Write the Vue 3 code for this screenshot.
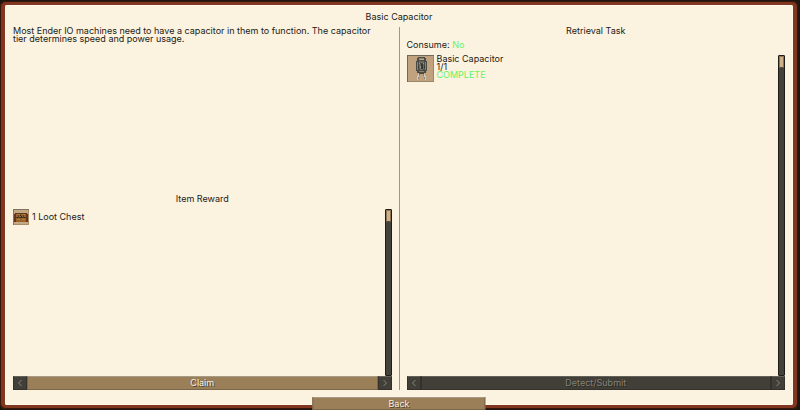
<script setup>
import { ref } from 'vue'

const task = ref({ name: 'Basic Capacitor', have: 1, need: 1, consume: false })
const reward = ref({ count: 1, name: 'Loot Chest' })
</script>

<template>
  <div class="screen">
    <main class="book">
      <h1 class="line title">Basic Capacitor</h1>
      <div class="pages">
        <section class="page">
          <p class="description">Most Ender IO machines need to have a capacitor in them to function. The capacitor tier determines speed and power usage.</p>
          <h2 class="line heading">Item Reward</h2>
          <div class="list">
            <div class="entry small">
              <svg class="slot" width="16" height="16" viewBox="0 0 16 16" shape-rendering="crispEdges" aria-hidden="true">
                <path fill="#c4a783" d="M0 0h16v16H0z" />
                <path fill="#80735f" d="M0 0h16v1H0zM0 1h1v15H0z" />
                <path fill="#a98d69" d="M15 1h1v15H1v-1h14z" />
                <path fill="#5a3a1c" d="M2 4h12v1h1v8H1V5h1z" />
                <path fill="#966329" d="M3 5h10v3H3zM3 9h10v4H3z" />
                <path fill="#b77a35" d="M4 5h2v1H4zM10 5h2v1h-2zM4 10h3v1H4zM9 10h3v1H9z" />
                <path fill="#702f1f" d="M1 5h2v3H1zM13 5h2v3h-2zM1 11h2v2H1zM13 11h2v2h-2zM5 6h1v2H5zM10 6h1v2h-1z" />
                <path fill="#302b22" d="M7 6h2v3H7zM4 8h1v1H4zM11 8h1v1h-1z" />
                <path fill="#668078" d="M7 7h1v1H7z" />
                <path fill="#a33b28" d="M8 6h1v1H8z" />
              </svg>
              <span class="line">{{ reward.count }} {{ reward.name }}</span>
            </div>
            <div class="track"><div class="thumb"></div></div>
          </div>
          <div class="actions">
            <button class="btn off arrow" aria-label="Previous reward">
              <svg width="6" height="8" viewBox="0 0 6 8" aria-hidden="true"><path d="M4.5 1L1.5 4l3 3" /></svg>
            </button>
            <button class="btn wide">Claim</button>
            <button class="btn off arrow" aria-label="Next reward">
              <svg width="6" height="8" viewBox="0 0 6 8" aria-hidden="true"><path d="M1.5 1l3 3-3 3" /></svg>
            </button>
          </div>
        </section>

        <div class="divider"></div>

        <section class="page">
          <h2 class="line heading">Retrieval Task</h2>
          <p class="line consume">Consume: <span class="green">{{ task.consume ? 'Yes' : 'No' }}</span></p>
          <div class="list">
            <div class="entry">
              <svg class="slot" width="27" height="27" viewBox="0 0 27 27" shape-rendering="crispEdges" aria-hidden="true">
                <path fill="#c1a27e" d="M0 0h27v27H0z" />
                <path fill="#71685a" d="M0 0h27v1H0zM0 1h1v26H0z" />
                <path fill="#9c8668" d="M26 1h1v26H1v-1h25z" />
                <path fill="#4b4b45" d="M11 2h7v1h1v3h1v10h-1v2h-2v1h-5v-1h-2v-2H9V6h1V3h1z" />
                <path fill="#85847b" d="M12 3h5v1h-5zM10 7h1v8h-1zM18 7h1v8h-1zM12 16h5v1h-5z" />
                <path fill="#b9a78d" d="M12 4h5v1h-5z" />
                <path fill="#6b6b64" d="M12 6h5v2h-5zM12 9h2v5h-2zM16 9h1v5h-1z" />
                <path fill="#98968c" d="M12 8h1v1h-1zM16 8h1v1h-1zM13 11h1v2h-1z" />
                <path fill="#353733" d="M14 9h2v5h-2zM11 11h1v2h-1zM17 11h1v2h-1z" />
                <path fill="#77766f" d="M13 14h3v1h-3z" />
                <path fill="#d3cdbf" d="M11 19h1v3h-1zM10 21h1v4h-1zM17 19h1v3h-1zM18 21h1v4h-1z" />
                <path fill="#89857a" d="M12 19h1v2h-1zM11 22h1v2h-1zM16 19h1v2h-1zM17 22h1v2h-1z" />
              </svg>
              <div class="details">
                <span class="line">{{ task.name }}</span>
                <span class="line">{{ task.have }}/{{ task.need }}</span>
                <span v-if="task.have >= task.need" class="line green">COMPLETE</span>
              </div>
            </div>
            <div class="track"><div class="thumb"></div></div>
          </div>
          <div class="actions">
            <button class="btn off arrow" aria-label="Previous task">
              <svg width="6" height="8" viewBox="0 0 6 8" aria-hidden="true"><path d="M4.5 1L1.5 4l3 3" /></svg>
            </button>
            <button class="btn off wide" disabled>Detect/Submit</button>
            <button class="btn off arrow" aria-label="Next task">
              <svg width="6" height="8" viewBox="0 0 6 8" aria-hidden="true"><path d="M1.5 1l3 3-3 3" /></svg>
            </button>
          </div>
        </section>
      </div>
      <button class="btn back">Back</button>
    </main>
  </div>
</template>

<style>
body {
  background: #1d1610;
}
</style>

<style scoped>
.screen {
  box-sizing: border-box;
  display: flex;
  min-height: 100vh;
  padding: 1px 2px 1px 0;
  background: #1d1610;
  color: #1c1b17;
  font: 9px/8px Inter, "Liberation Sans", sans-serif;
}
.book {
  position: relative;
  box-sizing: border-box;
  flex: 1;
  display: flex;
  flex-direction: column;
  gap: 6px;
  padding: 8px 8px 15px;
  border: 4px solid #82351f;
  border-width: 4px 5px;
  border-radius: 6px;
  background: #fbf2df;
  box-shadow: inset 0 0 0 1px #fff9eb;
  outline: 1px solid #35150c;
  outline-offset: -1px;
}
h1, h2, p {
  margin: 0;
  font-size: 9px;
  font-weight: 400;
}
.line {
  display: block;
  line-height: 8px;
  white-space: nowrap;
}
.title, .heading {
  text-align: center;
}
.pages {
  flex: 1;
  display: grid;
  grid-template-columns: 1fr 1px 1fr;
  column-gap: 7px;
}
.page {
  display: flex;
  flex-direction: column;
  min-width: 0;
}
.divider {
  background: #99988a;
}
.description {
  flex: 1 0 0;
  padding-right: 12px;
}
.heading, .consume {
  padding-bottom: 6px;
}
.green {
  color: #62f562;
}
.list {
  flex: 1 0 0;
  display: flex;
  justify-content: space-between;
}
.entry {
  display: flex;
  align-items: flex-start;
  gap: 3px;
}
.entry.small {
  align-self: flex-start;
  align-items: center;
}
.slot {
  display: block;
  flex: none;
}
.track {
  box-sizing: border-box;
  width: 7px;
  border: 1px solid #1d1d1a;
  border-radius: 1px;
  background: #43413a;
}
.thumb {
  box-sizing: border-box;
  height: 12px;
  border: 1px solid #8c7455;
  border-bottom-color: #594b39;
  background: #cfb089;
}
.actions {
  display: flex;
}
.btn {
  box-sizing: border-box;
  height: 14px;
  margin: 0;
  padding: 0;
  border: 1px solid #79664b;
  border-top-color: #a79b85;
  border-radius: 0;
  background: #9b7f59;
  color: #f2eee3;
  font: inherit;
  line-height: 12px;
  text-align: center;
  text-shadow: 1px 1px #514630;
}
.btn.off {
  border-color: #32312c;
  border-top-color: #62615a;
  background: #423f38;
  color: #858278;
  text-shadow: 1px 1px #292823;
}
.wide {
  flex: 1;
}
.arrow {
  display: flex;
  flex: none;
  align-items: center;
  justify-content: center;
  width: 14px;
}
.arrow path {
  fill: none;
  stroke: #85837b;
  stroke-width: 1;
}
.back {
  position: absolute;
  bottom: -5px;
  left: 50%;
  width: 22%;
  height: 13px;
  transform: translateX(-50%);
}
</style>
